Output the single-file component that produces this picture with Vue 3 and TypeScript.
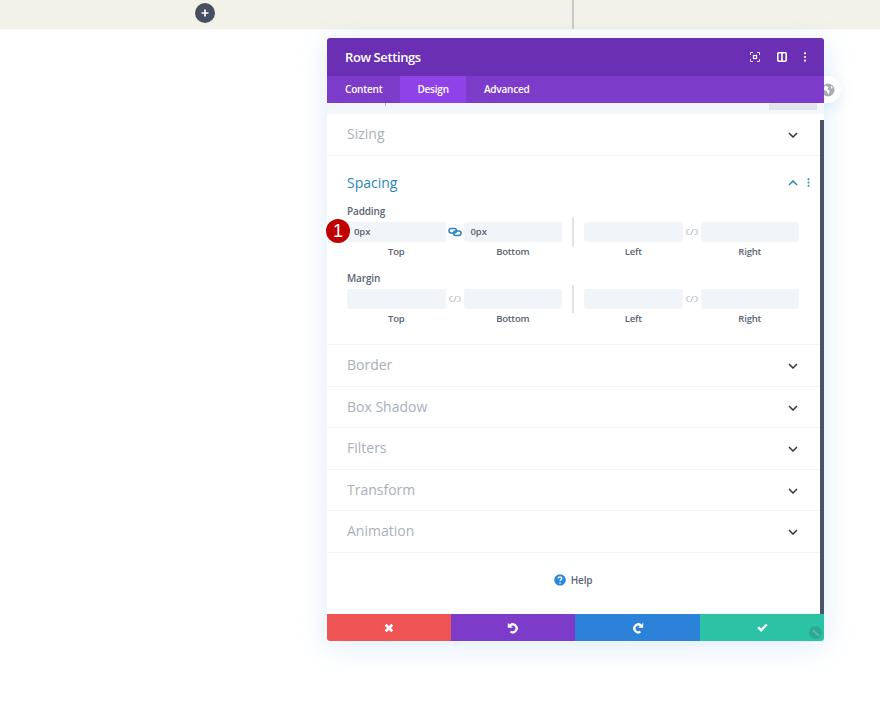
<script setup lang="ts">
interface Box { side: string; value: string }
interface Group { name: string; linked: boolean; pairs: Box[][] }

const groups: Group[] = [
  {
    name: 'Padding',
    linked: true,
    pairs: [
      [{ side: 'Top', value: '0px' }, { side: 'Bottom', value: '0px' }],
      [{ side: 'Left', value: '' }, { side: 'Right', value: '' }],
    ],
  },
  {
    name: 'Margin',
    linked: false,
    pairs: [
      [{ side: 'Top', value: '' }, { side: 'Bottom', value: '' }],
      [{ side: 'Left', value: '' }, { side: 'Right', value: '' }],
    ],
  },
]
const closedBelow = ['Border', 'Box Shadow', 'Filters', 'Transform', 'Animation']
</script>

<template>
  <div class="page">
    <div class="topbar">
      <div class="plus">
        <svg width="10" height="10" viewBox="0 0 10 10"><path d="M5 1.500v7M1.500 5h7" stroke="#fff" stroke-width="1.700" /></svg>
      </div>
      <div class="divider"></div>
    </div>

    <div class="modal">
      <div class="globe">
        <svg width="14" height="14" viewBox="0 0 14 14">
          <circle cx="7" cy="7" r="6.500" fill="#a9adb3" />
          <path d="M4 2.500 7.500 4 6.500 6.500 9 8 7.500 11.500 5.500 8 2.500 6.500ZM10 2.500l2 2.500-2 .8Z" fill="#fff" />
        </svg>
      </div>
      <header class="head">
        <span class="title">Row Settings</span>
        <div class="head-icons">
          <svg width="10" height="10" viewBox="0 0 10 10" fill="none" stroke="#fff" stroke-width="1">
            <path d="M.5 3V.5H3M7 .5h2.500V3M9.500 7v2.500H7M3 9.500H.5V7" opacity=".8" />
            <rect x="3.500" y="3.500" width="3" height="3" stroke-width="1.200" />
          </svg>
          <svg width="10" height="10" viewBox="0 0 10 10" fill="none" stroke="#fff">
            <rect x=".8" y=".8" width="8.400" height="8.400" rx="1" stroke-width="1.600" />
            <path d="M5 1v8" stroke-width="1.600" />
          </svg>
          <svg width="4" height="10" viewBox="0 0 4 10" fill="#fff">
            <circle cx="2" cy="1.300" r="1.100" /><circle cx="2" cy="5" r="1.100" /><circle cx="2" cy="8.700" r="1.100" />
          </svg>
        </div>
      </header>
      <nav class="tabs">
        <span class="tab">Content</span>
        <span class="tab active">Design</span>
        <span class="tab">Advanced</span>
      </nav>

      <div class="body">
        <div class="scrollbar"></div>
        <div class="strip">
          <span class="strip-tick"></span>
          <span class="strip-box"></span>
        </div>

        <section class="sec closed">
          <h3>Sizing</h3>
          <svg class="chev" width="10" height="6" viewBox="0 0 10 6"><path d="M1 1l4 4 4-4" fill="none" stroke="#32373c" stroke-width="1.500" /></svg>
        </section>

        <section class="sec open">
          <div class="open-head">
            <h3>Spacing</h3>
            <div class="open-icons">
              <svg width="10" height="6" viewBox="0 0 10 6"><path d="M1 5l4-4 4 4" fill="none" stroke="#2b87b0" stroke-width="1.500" /></svg>
              <svg width="3" height="9" viewBox="0 0 3 9" fill="#2b87b0">
                <circle cx="1.500" cy="1.200" r="1" /><circle cx="1.500" cy="4.500" r="1" /><circle cx="1.500" cy="7.800" r="1" />
              </svg>
            </div>
          </div>

          <div v-for="g in groups" :key="g.name" class="group">
            <div class="group-label">{{ g.name }}</div>
            <div class="rows">
              <div v-for="(pair, pi) in g.pairs" :key="pi" class="pair" :class="{ second: pi === 1 }">
                <div class="cell">
                  <div class="input">{{ pair[0].value }}</div>
                  <div class="side">{{ pair[0].side }}</div>
                </div>
                <svg class="link" width="14" height="10" viewBox="0 0 14 10" fill="none">
                  <template v-if="g.linked && pi === 0">
                    <rect x="1" y="1.500" width="7.500" height="4.500" rx="2.200" stroke="#2b82c0" stroke-width="1.500" />
                    <rect x="5.500" y="4" width="7.500" height="4.500" rx="2.200" stroke="#2b82c0" stroke-width="1.500" />
                  </template>
                  <template v-else>
                    <path d="M4.500 2.500H3.600a1.900 2.500 0 0 0 0 5H4.500M9.500 2.500h.9a1.900 2.500 0 0 1 0 5H9.500M5.700 8l2.600-6" stroke="#b4bac2" stroke-width="1" />
                  </template>
                </svg>
                <div class="cell">
                  <div class="input">{{ pair[1].value }}</div>
                  <div class="side">{{ pair[1].side }}</div>
                </div>
              </div>
            </div>
          </div>
          <div class="badge">1</div>
        </section>

        <section v-for="name in closedBelow" :key="name" class="sec closed">
          <h3>{{ name }}</h3>
          <svg class="chev" width="10" height="6" viewBox="0 0 10 6"><path d="M1 1l4 4 4-4" fill="none" stroke="#32373c" stroke-width="1.500" /></svg>
        </section>

        <div class="help">
          <svg width="12" height="12" viewBox="0 0 12 12">
            <circle cx="6" cy="6" r="5.800" fill="#2b87da" />
            <path d="M4.300 4.600c0-2.200 3.500-2.200 3.500-.2 0 1.300-1.800 1.300-1.800 2.700" fill="none" stroke="#fff" stroke-width="1.300" />
            <circle cx="6" cy="9" r=".8" fill="#fff" />
          </svg>
          <span>Help</span>
        </div>
      </div>

      <footer class="actions">
        <div class="act red">
          <svg width="10" height="10" viewBox="0 0 10 10"><path d="M1.700 1.700l6.600 6.600M8.300 1.700 1.700 8.300" stroke="#fff" stroke-width="2.700" /></svg>
        </div>
        <div class="act purple">
          <svg width="12" height="12" viewBox="0 0 12 12" fill="none">
            <path d="M3.200 3.400A3.900 3.900 0 1 1 3.500 9.600" stroke="#fff" stroke-width="2.300" />
            <path d="M.8 .8v5h5Z" fill="#fff" />
          </svg>
        </div>
        <div class="act blue">
          <svg width="12" height="12" viewBox="0 0 12 12" fill="none">
            <path d="M8.800 3.400A3.900 3.900 0 1 0 8.500 9.600" stroke="#fff" stroke-width="2.300" />
            <path d="M11.200 .8v5h-5Z" fill="#fff" />
          </svg>
        </div>
        <div class="act green">
          <svg width="11" height="9" viewBox="0 0 11 9"><path d="M1.200 4.300 4.200 7.200 9.800 1.500" fill="none" stroke="#fff" stroke-width="2.400" /></svg>
        </div>
        <div class="resize">
          <svg width="8" height="8" viewBox="0 0 8 8"><path d="M1 1l6 6" stroke="#5fb8a4" stroke-width="1.800" /></svg>
        </div>
      </footer>
    </div>
  </div>
</template>

<style scoped>
.page {
  width: 880px;
  height: 720px;
  overflow: hidden;
  background: #fff;
  font-family: "Open Sans", "Liberation Sans", sans-serif;
}
.topbar {
  position: relative;
  height: 29px;
  background: #f3f2e9;
  border-bottom: 1px solid #f9f9f5;
}
.plus {
  position: absolute;
  left: 195px;
  top: 3px;
  width: 20px;
  height: 20px;
  border-radius: 50%;
  background: #46505f;
  display: flex;
  align-items: center;
  justify-content: center;
}
.divider {
  position: absolute;
  left: 572px;
  top: 0;
  width: 2px;
  height: 29px;
  background: #c9c9c4;
}
.modal {
  position: relative;
  width: 497px;
  height: 603px;
  margin: 8px 0 0 327px;
  display: flex;
  flex-direction: column;
  border-radius: 3px;
  box-shadow: 0 5px 30px rgba(43, 135, 218, 0.16);
}
.globe {
  position: absolute;
  left: 483px;
  top: 38px;
  width: 31px;
  height: 27px;
  background: #fff;
  border-radius: 0 14px 14px 0;
  display: flex;
  align-items: center;
  padding-left: 11px;
  box-sizing: border-box;
  box-shadow: 0 4px 14px rgba(43, 135, 218, 0.12);
}
.head {
  position: relative;
  height: 38px;
  flex: none;
  background: #6a2fb2;
  border-radius: 3px 3px 0 0;
  display: flex;
  align-items: center;
  justify-content: space-between;
  padding: 0 17px 0 18px;
}
.title {
  color: #fff;
  font-size: 13px;
  letter-spacing: -0.4px;
  font-weight: 600;
}
.head-icons {
  display: flex;
  align-items: center;
  gap: 17px;
}
.head-icons svg:first-child {
  margin-right: 0;
  transform: translateX(1px);
}
.head-icons svg:nth-child(2) {
  transform: translateX(1px);
}
.tabs {
  position: relative;
  height: 27px;
  flex: none;
  display: flex;
  background: #7c3bc9;
}
.tab {
  color: #fff;
  font-size: 10px;
  letter-spacing: -0.2px;
  font-weight: 600;
  line-height: 27px;
  padding: 0 18px;
}
.tab.active {
  background: #8f42e8;
  padding: 0 17px;
}
.body {
  position: relative;
  flex: 1;
  background: #fff;
  display: flex;
  flex-direction: column;
}
.scrollbar {
  position: absolute;
  z-index: 1;
  right: 0;
  top: 17px;
  bottom: 0;
  width: 4px;
  background: #4a5368;
}
.strip {
  height: 11px;
  background: #f3f6fa;
  padding-right: 7px;
  display: flex;
  justify-content: space-between;
}
.strip-tick {
  width: 1px;
  height: 3px;
  margin-left: 58px;
  background: #a9b0ba;
}
.strip-box {
  width: 48px;
  height: 7px;
  background: #e1e5eb;
}
.sec {
  position: relative;
  border-bottom: 1px solid #f2f4f7;
  box-sizing: border-box;
}
.sec h3 {
  margin: 0;
  font-size: 14px;
  font-weight: 400;
  color: #a9b0ba;
  line-height: 20px;
}
.closed {
  height: 41.500px;
  padding: 0 26px 0 20px;
  display: flex;
  align-items: center;
  justify-content: space-between;
}
.chev {
  margin-top: 2px;
}
.open {
  height: 189.500px;
  padding: 17px 25px 0 20px;
}
.open-head {
  display: flex;
  justify-content: space-between;
  align-items: center;
  height: 20px;
}
.open-head h3 {
  color: #2b87b0;
}
.open-icons {
  display: flex;
  align-items: center;
  gap: 9px;
  margin-right: -11px;
}
.group {
  margin-top: 11px;
}
.group + .group {
  margin-top: 11.500px;
}
.group-label {
  font-size: 10px;
  letter-spacing: -0.15px;
  line-height: 14px;
  font-weight: 600;
  color: #5a6472;
}
.rows {
  display: flex;
  margin-top: 4px;
}
.pair {
  display: flex;
  align-items: flex-start;
  width: 215px;
}
.pair.second {
  margin-left: 22px;
  position: relative;
}
.pair.second::before {
  content: "";
  position: absolute;
  left: -12px;
  top: -4px;
  width: 2px;
  height: 28px;
  background: #dfe2e6;
}
.cell {
  width: 98.500px;
  flex: none;
}
.input {
  height: 20.500px;
  background: #f1f4f8;
  border-radius: 3px;
  font-size: 9.500px;
  letter-spacing: -0.1px;
  font-weight: 600;
  line-height: 20.500px;
  color: #5a6472;
  padding-left: 7px;
  box-sizing: border-box;
}
.side {
  margin-top: 3px;
  font-size: 9.500px;
  letter-spacing: -0.2px;
  font-weight: 600;
  line-height: 14px;
  color: #5a6472;
  text-align: center;
}
.link {
  flex: none;
  width: 14px;
  margin: 5px 2px 0 2px;
}
.badge {
  position: absolute;
  left: -1px;
  top: 63px;
  width: 24px;
  height: 24px;
  border-radius: 50%;
  background: #c00000;
  color: #fff;
  font-size: 18px;
  font-family: "Liberation Sans", sans-serif;
  line-height: 24px;
  text-align: center;
}
.help {
  flex: 1;
  display: flex;
  align-items: center;
  justify-content: center;
  gap: 5px;
  padding: 0 5px 6px 0;
  font-size: 10px;
  letter-spacing: -0.2px;
  font-weight: 600;
  color: #5c6674;
}
.actions {
  position: relative;
  height: 27px;
  flex: none;
  display: grid;
  grid-template-columns: 124px 124px 125px 124px;
  border-radius: 0 0 3px 3px;
  overflow: hidden;
}
.act {
  display: flex;
  align-items: center;
  justify-content: center;
}
.red { background: #ef5555; }
.purple { background: #7d3bc9; }
.blue { background: #2b82d8; }
.green { background: #2bc2a5; }
.resize {
  position: absolute;
  right: 2px;
  bottom: 2px;
  width: 13px;
  height: 13px;
  border-radius: 50%;
  background: #2aaa92;
  display: flex;
  align-items: center;
  justify-content: center;
}
</style>
